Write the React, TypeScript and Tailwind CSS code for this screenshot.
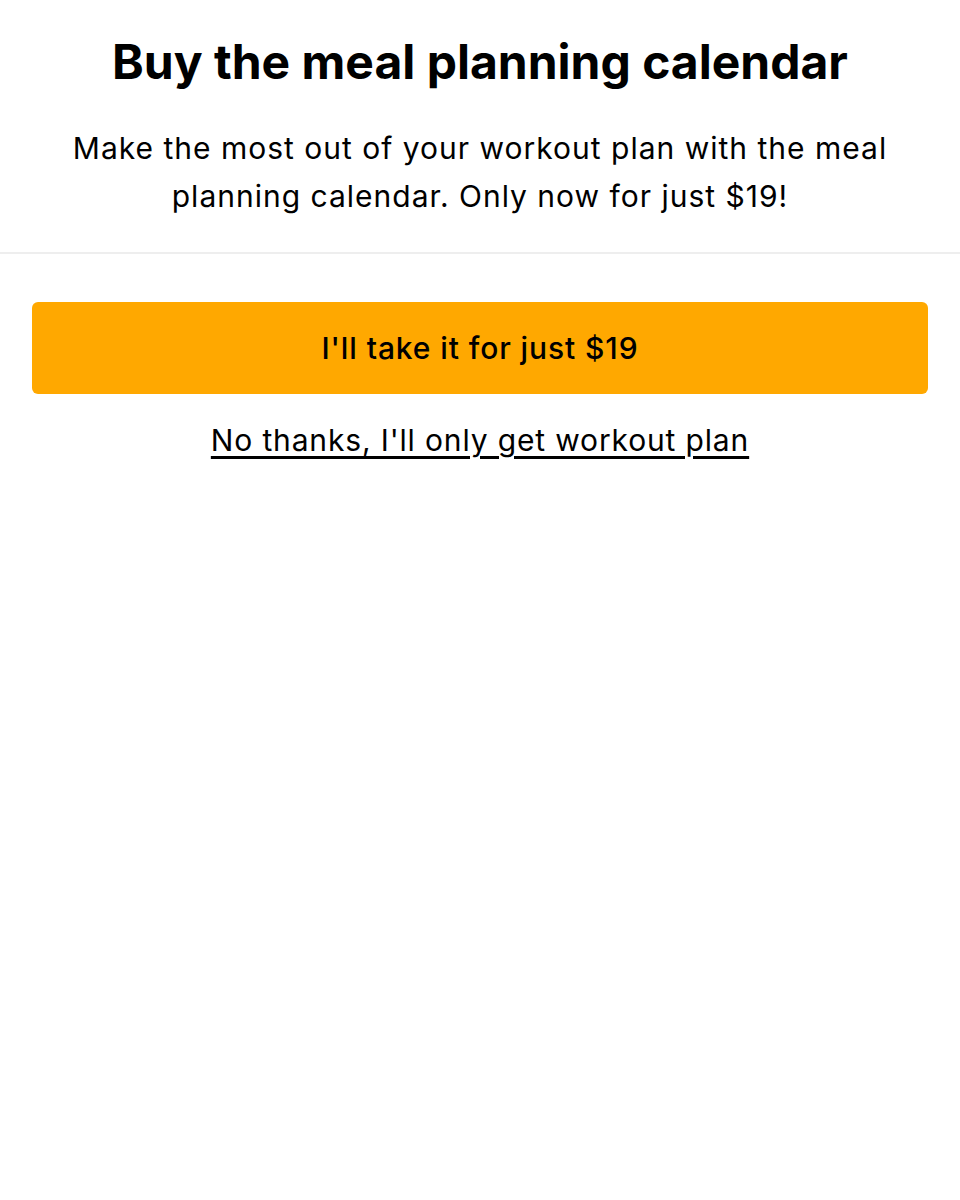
import React from 'react';

export default function App() {
  return (
    <div className="min-h-[1200px] bg-white text-black" style={{ fontFamily: 'Inter, "Noto Sans", sans-serif' }}>
      {/* Header */}
      <div className="px-8 pt-[30px] pb-[32px] text-center border-b-2 border-[#eeeeee]">
        <h1 className="text-[48px] font-bold leading-[64px]">Buy the meal planning calendar</h1>
        <p className="mt-[30px] text-[30px] leading-[48px] tracking-[1px]">
          Make the most out of your workout plan with the meal planning calendar. Only now for just $19!
        </p>
      </div>

      {/* Actions */}
      <div className="px-8 pt-12 flex flex-col items-center">
        <button className="w-full h-[92px] rounded-md bg-[#ffa800] text-[30px] tracking-[0.9px] font-medium text-black">
          I'll take it for just $19
        </button>
        <a href="#" className="mt-[22px] text-[30px] leading-[48px] tracking-[0.85px] underline underline-offset-[5px] text-black">
          No thanks, I'll only get workout plan
        </a>
      </div>
    </div>
  );
}
